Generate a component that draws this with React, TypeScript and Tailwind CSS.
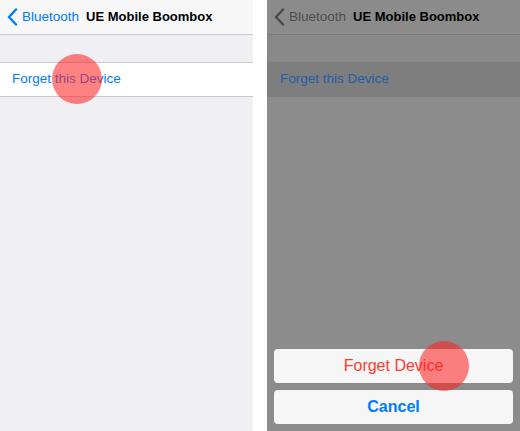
import { ReactNode } from 'react'

const font = { fontFamily: '"Liberation Sans", Arial, sans-serif' }

function Chevron({ color }: { color: string }) {
  return (
    <svg width="11" height="18" viewBox="0 0 11 18" className="shrink-0">
      <polyline
        points="9,1.5 2,9 9,16.5"
        fill="none"
        stroke={color}
        strokeWidth="2.4"
        strokeLinecap="round"
        strokeLinejoin="round"
      />
    </svg>
  )
}

// red touch marker drawn over the tapped control
function Tap({ className }: { className: string }) {
  return (
    <div
      className={`absolute w-[50px] h-[50px] rounded-full bg-[rgba(255,35,35,0.57)] pointer-events-none ${className}`}
    />
  )
}

function NavBar({
  dimmed,
  children,
}: {
  dimmed?: boolean
  children?: ReactNode
}) {
  return (
    <div
      className={`h-[35px] flex items-center pl-[7px] border-b ${
        dimmed ? 'bg-[#8b8b8b] border-[#7a7a7a]' : 'bg-[#f7f7f8] border-[#c8c7cc]'
      }`}
    >
      <Chevron color={dimmed ? '#4a4a4a' : '#007aff'} />
      <span
        className={`ml-[4px] text-[13.5px] ${dimmed ? 'text-[#4e4e4e]' : 'text-[#007aff]'}`}
      >
        Bluetooth
      </span>
      <span className="ml-[7px] text-[13px] font-bold text-black">
        UE Mobile Boombox
      </span>
      {children}
    </div>
  )
}

export default function App() {
  return (
    <div className="w-[520px] h-[431px] flex bg-white overflow-hidden" style={font}>
      {/* device settings */}
      <div className="relative w-[253px] h-full flex flex-col bg-[#efeff4]">
        <NavBar />
        <div className="h-[27px]" />
        <div className="h-[35px] flex items-center pl-[12px] bg-white border-y border-[#c8c7cc]">
          <span className="text-[13.5px] text-[#007aff]">Forget this Device</span>
        </div>
        <Tap className="left-[52px] top-[54px]" />
      </div>

      {/* same screen with the confirmation sheet open */}
      <div className="relative ml-[14px] w-[253px] h-full flex flex-col bg-[#8c8c8c]">
        <NavBar dimmed />
        <div className="h-[27px] bg-[#898989]" />
        <div className="h-[35px] flex items-center pl-[13px] bg-[#7e7e7e]">
          <span className="text-[13.5px] text-[#1f5fab]">Forget this Device</span>
        </div>
        <div className="mt-auto flex flex-col gap-[7px] px-[7px] pb-[7px]">
          <button className="h-[34px] rounded-[4px] bg-[#f6f6f6] text-[16px] text-[#ff3b30]">
            Forget Device
          </button>
          <button className="h-[34px] rounded-[4px] bg-[#f6f6f6] text-[16px] font-bold text-[#007aff]">
            Cancel
          </button>
        </div>
        <Tap className="left-[152px] top-[341px]" />
      </div>
    </div>
  )
}
